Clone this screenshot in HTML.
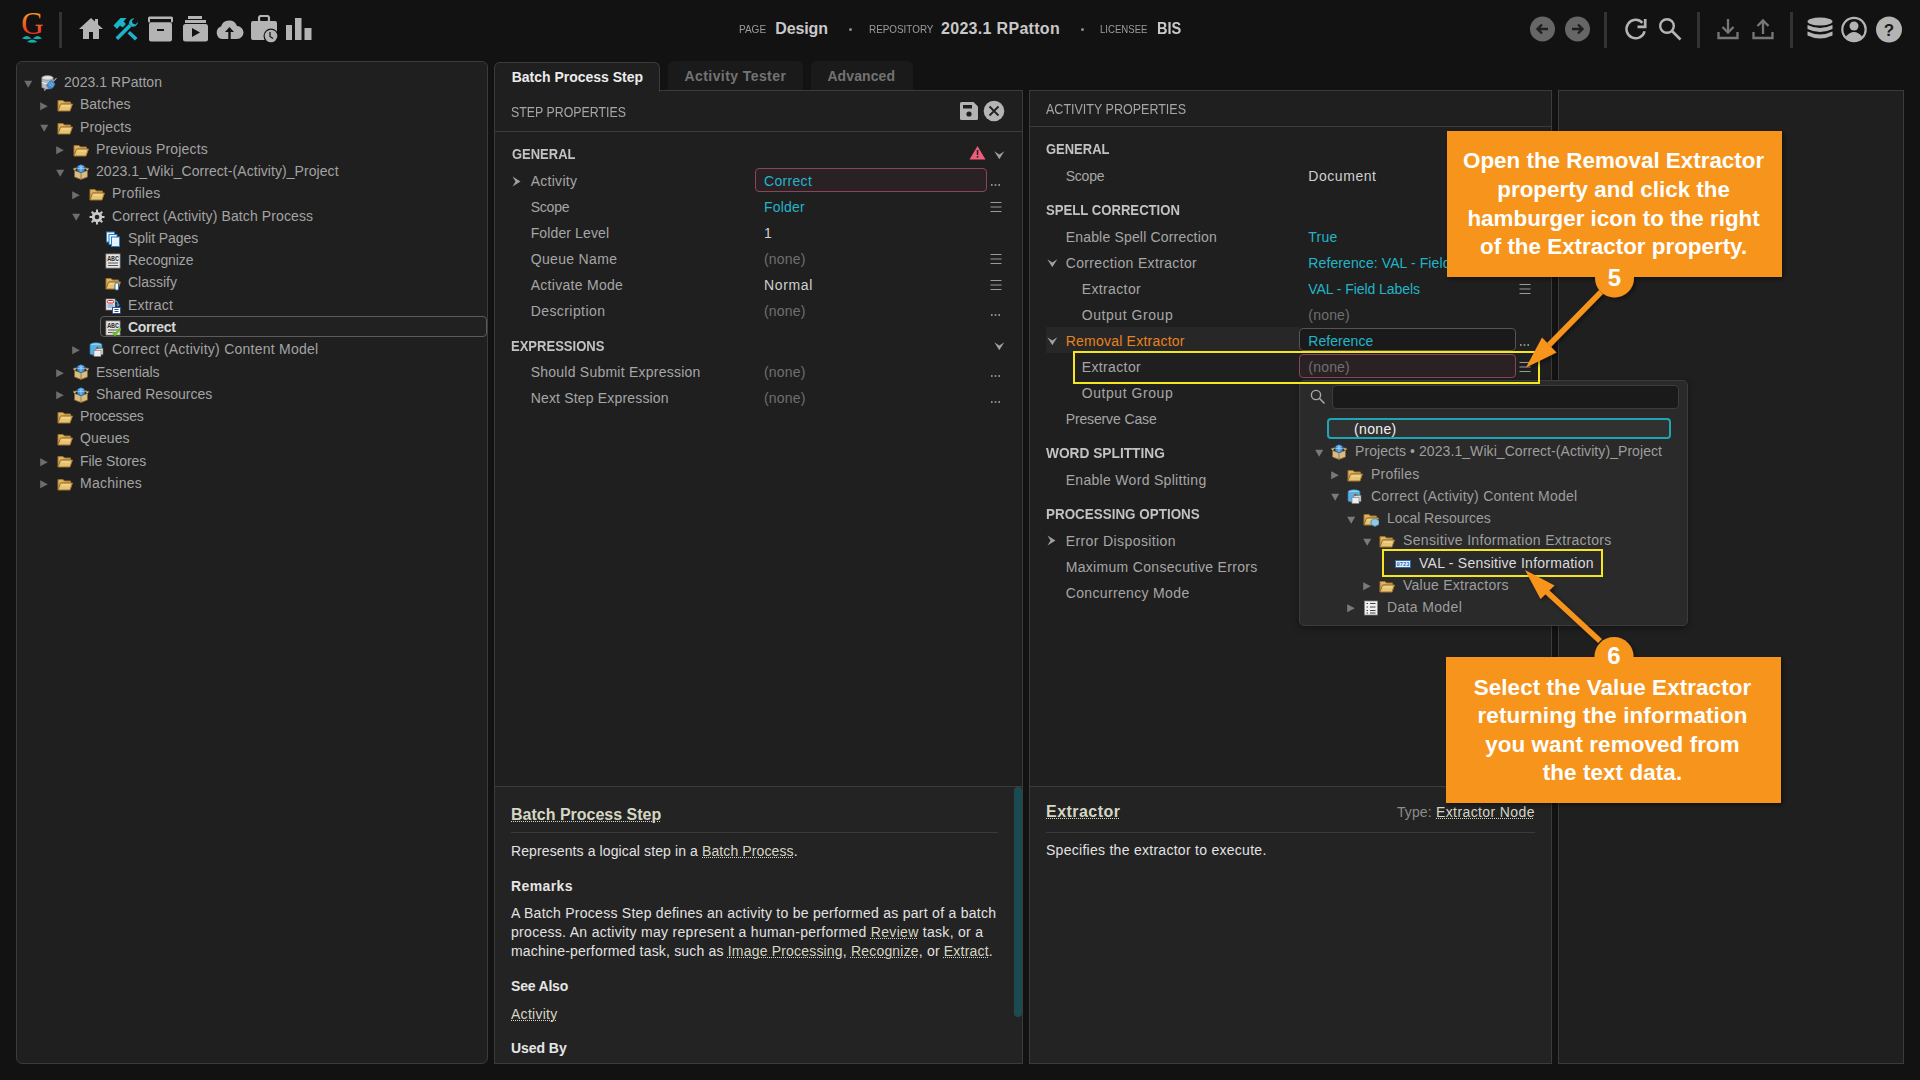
<!DOCTYPE html>
<html><head><meta charset="utf-8"><style>
html,body{margin:0;padding:0;width:1920px;height:1080px;overflow:hidden;background:#121212;}
body{position:relative;font-family:"Liberation Sans",sans-serif;}
.t{position:absolute;white-space:nowrap;}
.r{position:absolute;}
</style></head><body>
<div class="r" style="left:16px;top:61px;width:472px;height:1003px;background:#1f1f1f;border:1px solid #3b3b3b;border-radius:6px;box-sizing:border-box;"></div><div class="r" style="left:494px;top:90px;width:529px;height:974px;background:#1f1f1f;border:1px solid #3b3b3b;box-sizing:border-box;"></div><div class="r" style="left:495px;top:786px;width:527px;height:277px;background:#232323;border-top:1px solid #3b3b3b;box-sizing:border-box;"></div><div class="r" style="left:495px;top:131px;width:527px;height:1px;background:#3b3b3b;"></div><div class="r" style="left:494px;top:62px;width:166px;height:30px;background:#1f1f1f;border:1px solid #3b3b3b;border-bottom:none;border-radius:6px 6px 0 0;box-sizing:border-box;"></div><div class="r" style="left:668px;top:61px;width:135px;height:29px;background:#1a1a1a;border-radius:6px 6px 0 0;"></div><div class="r" style="left:811px;top:61px;width:102px;height:29px;background:#1a1a1a;border-radius:6px 6px 0 0;"></div><div class="r" style="left:1029px;top:90px;width:523px;height:974px;background:#1f1f1f;border:1px solid #3b3b3b;box-sizing:border-box;"></div><div class="r" style="left:1030px;top:126px;width:521px;height:1px;background:#3b3b3b;"></div><div class="r" style="left:1030px;top:786px;width:521px;height:277px;background:#232323;border-top:1px solid #3b3b3b;box-sizing:border-box;"></div><div class="r" style="left:1558px;top:90px;width:346px;height:974px;background:#1f1f1f;border:1px solid #3b3b3b;box-sizing:border-box;"></div><div class="r" style="left:1014px;top:787px;width:8px;height:230px;background:#1b4a50;border-radius:4px;"></div><svg class="r" style="left:16px;top:8px;" width="34" height="40" viewBox="0 0 34 40">
<defs><linearGradient id="gg" x1="0" y1="0" x2="0" y2="1"><stop offset="0.15" stop-color="#f5a020"/><stop offset="0.85" stop-color="#f02a20"/></linearGradient></defs>
<text x="16.5" y="26" font-family="Liberation Serif" font-size="31" fill="url(#gg)" text-anchor="middle">G</text>
<path d="M6 30.5 Q10.5 25.5 15.5 30.5 Q10.5 32 6 30.5Z M17 30.5 Q21.5 25.5 26 30.5 Q21.5 32 17 30.5Z M11 34 Q16 29 21.5 34 Q16 35.5 11 34Z" fill="#12b0a8"/>
</svg><div class="r" style="left:59px;top:12px;width:3px;height:36px;background:#333;"></div><svg class="r" style="left:78px;top:17px;" width="26" height="23" viewBox="0 0 26 23"><path d="M13 1 L25 12 L21 12 L21 22 L15 22 L15 15 L11 15 L11 22 L5 22 L5 12 L1 12 Z" fill="#b4b4b4"/><rect x="17" y="2" width="3" height="6" fill="#b4b4b4"/></svg><svg class="r" style="left:112px;top:16px;" width="27" height="26" viewBox="0 0 27 26"><g fill="#1bb5c9"><path d="M3.5 21.5 L17 8 L19.6 10.6 L6.1 24.1 Z"/><path d="M17 8 A5.2 5.2 0 0 1 22.5 2.2 L19.8 5 L20.8 7.6 L23.4 8.6 L26 5.9 A5.2 5.2 0 0 1 19.6 10.6 Z"/><path d="M1.5 9.5 L8.5 2 L14.5 2 L11.5 5.5 L14 8 L10.5 11.5 L8 9.5 L5 13 Z"/><path d="M15.5 17.5 L18 15 L25.5 22 L23 24.5 Z"/></g></svg><svg class="r" style="left:147px;top:16px;" width="27" height="26" viewBox="0 0 27 26"><rect x="1" y="0.5" width="25" height="6" rx="1.5" fill="#b4b4b4"/><rect x="3" y="3" width="21" height="3" fill="#121212"/><rect x="2" y="6.5" width="23" height="19" rx="2" fill="#b4b4b4"/><rect x="10" y="13" width="7" height="2" fill="#121212"/></svg><svg class="r" style="left:182px;top:16px;" width="27" height="26" viewBox="0 0 27 26"><rect x="6" y="0" width="14" height="3" fill="#b4b4b4"/><rect x="3" y="4" width="21" height="3" fill="#b4b4b4"/><rect x="1" y="8" width="25" height="17.5" rx="2.5" fill="#b4b4b4"/><path d="M10 12 L18 16.5 L10 21 Z" fill="#121212"/></svg><svg class="r" style="left:215px;top:18px;" width="29" height="22" viewBox="0 0 29 22"><path d="M7 21 A6.5 6.5 0 0 1 6 8.5 A8.5 8.5 0 0 1 22 8 A6.5 6.5 0 0 1 22 21 Z" fill="#b4b4b4"/><path d="M14.5 9 L10 14 L13.3 14 L13.3 21 L15.7 21 L15.7 14 L19 14 Z" fill="#121212"/></svg><svg class="r" style="left:250px;top:15px;" width="30" height="29" viewBox="0 0 30 29"><rect x="9" y="1" width="10" height="6" rx="2" fill="none" stroke="#b4b4b4" stroke-width="2.2"/><rect x="1" y="6" width="26" height="19" rx="2" fill="#b4b4b4"/><circle cx="21" cy="21" r="7.5" fill="#121212"/><circle cx="21" cy="21" r="6.3" fill="#b4b4b4"/><path d="M20 17 L20 21.5 L23 23.5" stroke="#121212" stroke-width="1.2" fill="none"/></svg><svg class="r" style="left:285px;top:17px;" width="28" height="24" viewBox="0 0 28 24"><rect x="1" y="8" width="6" height="15" fill="#b4b4b4"/><rect x="10" y="1" width="6.5" height="22" fill="#b4b4b4"/><rect x="19.5" y="11" width="7" height="12" fill="#b4b4b4"/></svg><div class="t" style="left:739.30px;top:24.41px;font-size:10.5px;line-height:10.5px;font-weight:400;color:#9b9b9b;transform:scaleX(0.9542);transform-origin:0 0;">PAGE</div><div class="t" style="left:775.30px;top:20.86px;font-size:16px;line-height:16px;font-weight:700;color:#c9c9c9;letter-spacing:-0.12px;">Design</div><div class="r" style="left:849px;top:28px;width:3px;height:3px;background:#8a8a8a;border-radius:50%;"></div><div class="t" style="left:868.50px;top:24.41px;font-size:10.5px;line-height:10.5px;font-weight:400;color:#9b9b9b;transform:scaleX(0.9416);transform-origin:0 0;">REPOSITORY</div><div class="t" style="left:941.00px;top:20.86px;font-size:16px;line-height:16px;font-weight:700;color:#c9c9c9;letter-spacing:0.308px;">2023.1 RPatton</div><div class="r" style="left:1081px;top:28px;width:3px;height:3px;background:#8a8a8a;border-radius:50%;"></div><div class="t" style="left:1100.30px;top:24.41px;font-size:10.5px;line-height:10.5px;font-weight:400;color:#9b9b9b;transform:scaleX(0.9133);transform-origin:0 0;">LICENSEE</div><div class="t" style="left:1157.00px;top:20.43px;font-size:16.5px;line-height:16.5px;font-weight:700;color:#c9c9c9;transform:scaleX(0.8836);transform-origin:0 0;">BIS</div><svg class="r" style="left:1529px;top:16px;" width="27" height="26" viewBox="0 0 27 26"><circle cx="13.5" cy="13" r="12.5" fill="#666"/><path d="M19 13 H9 M13 8.5 L8.5 13 L13 17.5" stroke="#1e1e1e" stroke-width="2.4" fill="none"/></svg><svg class="r" style="left:1564px;top:16px;" width="27" height="26" viewBox="0 0 27 26"><circle cx="13.5" cy="13" r="12.5" fill="#666"/><path d="M8 13 H18 M14 8.5 L18.5 13 L14 17.5" stroke="#1e1e1e" stroke-width="2.4" fill="none"/></svg><div class="r" style="left:1604px;top:12px;width:3px;height:36px;background:#333;"></div><svg class="r" style="left:1624px;top:17px;" width="24" height="24" viewBox="0 0 24 24"><path d="M18.4 5.8 A9.2 9.2 0 1 0 20.6 14.2" stroke="#b4b4b4" stroke-width="2.5" fill="none"/><path d="M13.5 9.8 H21.2 V2" stroke="#b4b4b4" stroke-width="2.7" fill="none"/></svg><svg class="r" style="left:1658px;top:17px;" width="25" height="24" viewBox="0 0 25 24"><circle cx="9" cy="9" r="6.8" stroke="#b4b4b4" stroke-width="2.4" fill="none"/><path d="M14 14 L22.5 22.5" stroke="#b4b4b4" stroke-width="2.6"/></svg><div class="r" style="left:1697px;top:12px;width:3px;height:36px;background:#333;"></div><svg class="r" style="left:1717px;top:17px;" width="23" height="24" viewBox="0 0 23 24"><path d="M11 2 V15 M5.5 10 L11 15.5 L16.5 10" stroke="#777" stroke-width="2.3" fill="none"/><path d="M1.5 15 V21 H20.5 V15" stroke="#777" stroke-width="2.3" fill="none"/></svg><svg class="r" style="left:1752px;top:17px;" width="23" height="24" viewBox="0 0 23 24"><path d="M11 17 V3.5 M5.5 9 L11 3.5 L16.5 9" stroke="#777" stroke-width="2.3" fill="none"/><path d="M1.5 15 V21 H20.5 V15" stroke="#777" stroke-width="2.3" fill="none"/></svg><div class="r" style="left:1790px;top:12px;width:3px;height:36px;background:#333;"></div><svg class="r" style="left:1806px;top:17px;" width="28" height="24" viewBox="0 0 28 24"><ellipse cx="14" cy="4.5" rx="12.5" ry="4" fill="#b4b4b4"/><path d="M1.5 8 Q14 14 26.5 8 V12 Q14 18 1.5 12Z" fill="#b4b4b4"/><path d="M1.5 14.5 Q14 20.5 26.5 14.5 V18.5 Q14 24.5 1.5 18.5Z" fill="#b4b4b4"/></svg><svg class="r" style="left:1840px;top:16px;" width="28" height="27" viewBox="0 0 28 27"><circle cx="14" cy="13.5" r="11.7" stroke="#b4b4b4" stroke-width="2.2" fill="none"/><circle cx="14" cy="10" r="4.5" fill="#b4b4b4"/><path d="M5.5 21 Q14 11 22.5 21 Q14 28 5.5 21Z" fill="#b4b4b4"/></svg><svg class="r" style="left:1875px;top:16px;" width="28" height="27" viewBox="0 0 28 27"><circle cx="14" cy="13.5" r="13" fill="#b4b4b4"/><text x="14" y="19.5" font-family="Liberation Sans" font-weight="700" font-size="17" fill="#1a1a1a" text-anchor="middle">?</text></svg><svg class="r" style="left:24px;top:79.5px;" width="9" height="8" viewBox="0 0 9 8"><path d="M0.2 0.8 H8.2 L4.2 7.8 Z" fill="#6e6e6e"/></svg><svg class="r" style="left:41px;top:75px;" width="16" height="16" viewBox="0 0 16 16"><path d="M0.8 2.8 V12.5 Q6.5 15.6 12.2 12.5 V2.8" fill="#b8bcc0" stroke="#7a7e82" stroke-width=".6"/><ellipse cx="6.5" cy="2.8" rx="5.7" ry="2.3" fill="#dfe2e5" stroke="#7a7e82" stroke-width=".6"/><path d="M0.8 7.6 Q6.5 10.6 12.2 7.6" stroke="#eef0f2" stroke-width="1" fill="none"/><path d="M3.2 15.5 L15.5 3.2" stroke="#b0b0b0" stroke-width="1.1"/><rect x="6.8" y="6" width="6" height="7.5" rx="1.6" transform="rotate(45 9.8 9.75)" fill="#3f8fd2" stroke="#2a64a0" stroke-width=".6"/><path d="M8 8.5 L11.5 12 M9.5 7 L13 10.5" stroke="#bfe0ff" stroke-width=".6"/></svg><div class="t" style="left:64.00px;top:75.15px;font-size:14px;line-height:14px;font-weight:400;color:#a3a3a3;letter-spacing:0.054px;">2023.1 RPatton</div><svg class="r" style="left:40px;top:101.56px;" width="9" height="9" viewBox="0 0 9 9"><path d="M0.2 0.2 L7.8 4.2 L0.2 8.2 Z" fill="#6e6e6e"/></svg><svg class="r" style="left:57px;top:97px;" width="16" height="16" viewBox="0 0 16 16"><path d="M1 3.5 H6 L7.5 5 H13.5 V7 H4 L1 13.5 Z" fill="#dcb462" stroke="#a0722c" stroke-width="1"/><path d="M3.5 7 H15.5 L13 14 H1 Z" fill="#e6c474" stroke="#a0722c" stroke-width="1"/><path d="M4.5 9 H13" stroke="#f6e2a8" stroke-width="0.8"/></svg><div class="t" style="left:80.00px;top:97.41px;font-size:14px;line-height:14px;font-weight:400;color:#a3a3a3;letter-spacing:-0.033px;">Batches</div><svg class="r" style="left:40px;top:124.02000000000001px;" width="9" height="8" viewBox="0 0 9 8"><path d="M0.2 0.8 H8.2 L4.2 7.8 Z" fill="#6e6e6e"/></svg><svg class="r" style="left:57px;top:120px;" width="16" height="16" viewBox="0 0 16 16"><path d="M1 3.5 H6 L7.5 5 H13.5 V7 H4 L1 13.5 Z" fill="#dcb462" stroke="#a0722c" stroke-width="1"/><path d="M3.5 7 H15.5 L13 14 H1 Z" fill="#e6c474" stroke="#a0722c" stroke-width="1"/><path d="M4.5 9 H13" stroke="#f6e2a8" stroke-width="0.8"/></svg><div class="t" style="left:80.00px;top:119.67px;font-size:14px;line-height:14px;font-weight:400;color:#a3a3a3;letter-spacing:0.1px;">Projects</div><svg class="r" style="left:56px;top:146.08px;" width="9" height="9" viewBox="0 0 9 9"><path d="M0.2 0.2 L7.8 4.2 L0.2 8.2 Z" fill="#6e6e6e"/></svg><svg class="r" style="left:73px;top:142px;" width="16" height="16" viewBox="0 0 16 16"><path d="M1 3.5 H6 L7.5 5 H13.5 V7 H4 L1 13.5 Z" fill="#dcb462" stroke="#a0722c" stroke-width="1"/><path d="M3.5 7 H15.5 L13 14 H1 Z" fill="#e6c474" stroke="#a0722c" stroke-width="1"/><path d="M4.5 9 H13" stroke="#f6e2a8" stroke-width="0.8"/></svg><div class="t" style="left:96.00px;top:141.93px;font-size:14px;line-height:14px;font-weight:400;color:#a3a3a3;letter-spacing:0.175px;">Previous Projects</div><svg class="r" style="left:56px;top:168.54000000000002px;" width="9" height="8" viewBox="0 0 9 8"><path d="M0.2 0.8 H8.2 L4.2 7.8 Z" fill="#6e6e6e"/></svg><svg class="r" style="left:73px;top:164px;" width="16" height="16" viewBox="0 0 16 16"><path d="M1.5 6.5 L8 8.5 L14.5 6.5 V13 L8 15.5 L1.5 13 Z" fill="#d9bb84" stroke="#85622c" stroke-width=".8"/><path d="M8 8.5 V15.5" stroke="#85622c" stroke-width=".7"/><path d="M1.5 6.5 L0 4.5 L5 3.5 M14.5 6.5 L16 4.5 L11 3.5" fill="#e8cc98" stroke="#85622c" stroke-width=".7"/><circle cx="8" cy="4.6" r="3.9" fill="#3d94dc" stroke="#1f5e9c" stroke-width=".6"/><path d="M4.5 4.6 H11.5 M8 1 V8 M5.5 2.5 Q8 4 10.5 2.5" stroke="#cfe8ff" stroke-width=".6" fill="none"/></svg><div class="t" style="left:96.00px;top:164.19px;font-size:14px;line-height:14px;font-weight:400;color:#a3a3a3;letter-spacing:0.057px;">2023.1_Wiki_Correct-(Activity)_Project</div><svg class="r" style="left:72px;top:190.60000000000002px;" width="9" height="9" viewBox="0 0 9 9"><path d="M0.2 0.2 L7.8 4.2 L0.2 8.2 Z" fill="#6e6e6e"/></svg><svg class="r" style="left:89px;top:186px;" width="16" height="16" viewBox="0 0 16 16"><path d="M1 3.5 H6 L7.5 5 H13.5 V7 H4 L1 13.5 Z" fill="#dcb462" stroke="#a0722c" stroke-width="1"/><path d="M3.5 7 H15.5 L13 14 H1 Z" fill="#e6c474" stroke="#a0722c" stroke-width="1"/><path d="M4.5 9 H13" stroke="#f6e2a8" stroke-width="0.8"/></svg><div class="t" style="left:112.00px;top:186.45px;font-size:14px;line-height:14px;font-weight:400;color:#a3a3a3;letter-spacing:0.214px;">Profiles</div><svg class="r" style="left:72px;top:213.06px;" width="9" height="8" viewBox="0 0 9 8"><path d="M0.2 0.8 H8.2 L4.2 7.8 Z" fill="#6e6e6e"/></svg><svg class="r" style="left:89px;top:209px;" width="16" height="16" viewBox="0 0 16 16"><g fill="#c8c8c8"><circle cx="8" cy="8" r="5.2"/><rect x="7" y="0.5" width="2" height="15"/><rect x="0.5" y="7" width="15" height="2"/><rect x="7" y="0.5" width="2" height="15" transform="rotate(45 8 8)"/><rect x="7" y="0.5" width="2" height="15" transform="rotate(-45 8 8)"/></g><circle cx="8" cy="8" r="2.3" fill="#1f1f1f"/></svg><div class="t" style="left:112.00px;top:208.71px;font-size:14px;line-height:14px;font-weight:400;color:#a3a3a3;letter-spacing:0.11px;">Correct (Activity) Batch Process</div><svg class="r" style="left:105px;top:231px;" width="16" height="16" viewBox="0 0 16 16"><rect x="1.5" y="1" width="8" height="10" fill="#e8f2fa" stroke="#2f7fc0" stroke-width="1"/><rect x="4" y="3.5" width="8" height="10" fill="#e8f2fa" stroke="#2f7fc0" stroke-width="1"/><rect x="6.5" y="6" width="8" height="9.5" fill="#e8f2fa" stroke="#2f7fc0" stroke-width="1"/></svg><div class="t" style="left:128.00px;top:230.97px;font-size:14px;line-height:14px;font-weight:400;color:#a3a3a3;letter-spacing:-0.05px;">Split Pages</div><svg class="r" style="left:105px;top:253px;" width="16" height="16" viewBox="0 0 16 16"><rect x="1" y="1" width="14" height="14" fill="#e6e6e6" stroke="#9a9a9a" stroke-width=".8"/><text x="8" y="7.6" font-family="Liberation Mono" font-weight="700" font-size="6.5" fill="#333" text-anchor="middle">ABC</text><path d="M3 10 H13 M3 12.5 H13" stroke="#555" stroke-width="1"/></svg><div class="t" style="left:128.00px;top:253.23px;font-size:14px;line-height:14px;font-weight:400;color:#a3a3a3;letter-spacing:-0.075px;">Recognize</div><svg class="r" style="left:105px;top:275px;" width="16" height="16" viewBox="0 0 16 16"><path d="M1 3.5 H6 L7.5 5 H13.5 V7 H4 L1 13.5 Z" fill="#dcb462" stroke="#a0722c" stroke-width="1"/><path d="M3.5 7 H15.5 L13 14 H1 Z" fill="#e6c474" stroke="#a0722c" stroke-width="1"/><path d="M4.5 9 H13" stroke="#f6e2a8" stroke-width="0.8"/><rect x="10" y="8" width="3.5" height="7" rx="1" fill="#fff" stroke="#2a6aa8" stroke-width="1"/></svg><div class="t" style="left:128.00px;top:275.49px;font-size:14px;line-height:14px;font-weight:400;color:#a3a3a3;letter-spacing:0.0px;">Classify</div><svg class="r" style="left:105px;top:298px;" width="16" height="16" viewBox="0 0 16 16"><rect x="1" y="1" width="9" height="11" fill="#e8e8e8" stroke="#999" stroke-width=".6"/><rect x="2.5" y="2.5" width="6" height="2.5" rx="1" fill="#fff" stroke="#d02020" stroke-width="1"/><path d="M2.5 7 H8.5 M2.5 9 H8.5" stroke="#4a88c8" stroke-width=".9"/><path d="M10 3 Q13 3 13 7" stroke="#3a90d8" stroke-width="1.5" fill="none"/><path d="M11 6.5 L13 9 L15 6.5Z" fill="#3a90d8"/><rect x="7.5" y="9.5" width="8" height="6" fill="#fff" stroke="#3050a0" stroke-width="1"/><path d="M9.5 11.5 H13.5 M9.5 13.5 H13.5" stroke="#333" stroke-width=".9"/></svg><div class="t" style="left:128.00px;top:297.75px;font-size:14px;line-height:14px;font-weight:400;color:#a3a3a3;letter-spacing:0.2px;">Extract</div><div class="r" style="left:100px;top:316px;width:387px;height:21px;border:1px solid #5c5c5c;border-radius:4px;box-sizing:border-box;background:#212121;"></div><svg class="r" style="left:105px;top:320px;" width="16" height="16" viewBox="0 0 16 16"><rect x="1" y="1" width="14" height="14" fill="#e6e6e6" stroke="#9a9a9a" stroke-width=".8"/><text x="8" y="7.6" font-family="Liberation Mono" font-weight="700" font-size="6.5" fill="#333" text-anchor="middle">ABC</text><path d="M3 10 H13 M3 12.5 H13" stroke="#555" stroke-width="1"/><path d="M7.5 12 L10 14.5 L15.5 8.5" stroke="#6cc02a" stroke-width="2.4" fill="none"/></svg><div class="t" style="left:128.00px;top:320.01px;font-size:14px;line-height:14px;font-weight:700;color:#d6d6d6;letter-spacing:-0.333px;">Correct</div><svg class="r" style="left:72px;top:346.42px;" width="9" height="9" viewBox="0 0 9 9"><path d="M0.2 0.2 L7.8 4.2 L0.2 8.2 Z" fill="#6e6e6e"/></svg><svg class="r" style="left:89px;top:342px;" width="16" height="16" viewBox="0 0 16 16"><ellipse cx="7" cy="3" rx="6" ry="2.3" fill="#8ed0f0" stroke="#2a7ab8" stroke-width=".7"/><path d="M1 3 V12 Q7 15 13 12 V3" fill="#5ab0e0" stroke="#2a7ab8" stroke-width=".7"/><rect x="7" y="6.5" width="7" height="6" fill="#ddd" stroke="#777" stroke-width=".6"/><rect x="5" y="8.5" width="7" height="6" fill="#eee" stroke="#777" stroke-width=".6"/><path d="M7.5 6.5 L9 5" stroke="#d02020" stroke-width="1.2"/><path d="M9 6.5 L11 5" stroke="#40a040" stroke-width="1.2"/></svg><div class="t" style="left:112.00px;top:342.27px;font-size:14px;line-height:14px;font-weight:400;color:#a3a3a3;letter-spacing:0.252px;">Correct (Activity) Content Model</div><svg class="r" style="left:56px;top:368.68px;" width="9" height="9" viewBox="0 0 9 9"><path d="M0.2 0.2 L7.8 4.2 L0.2 8.2 Z" fill="#6e6e6e"/></svg><svg class="r" style="left:73px;top:364px;" width="16" height="16" viewBox="0 0 16 16"><path d="M1.5 6.5 L8 8.5 L14.5 6.5 V13 L8 15.5 L1.5 13 Z" fill="#d9bb84" stroke="#85622c" stroke-width=".8"/><path d="M8 8.5 V15.5" stroke="#85622c" stroke-width=".7"/><path d="M1.5 6.5 L0 4.5 L5 3.5 M14.5 6.5 L16 4.5 L11 3.5" fill="#e8cc98" stroke="#85622c" stroke-width=".7"/><circle cx="8" cy="4.6" r="3.9" fill="#3d94dc" stroke="#1f5e9c" stroke-width=".6"/><path d="M4.5 4.6 H11.5 M8 1 V8 M5.5 2.5 Q8 4 10.5 2.5" stroke="#cfe8ff" stroke-width=".6" fill="none"/></svg><div class="t" style="left:96.00px;top:364.53px;font-size:14px;line-height:14px;font-weight:400;color:#a3a3a3;letter-spacing:-0.022px;">Essentials</div><svg class="r" style="left:56px;top:390.94000000000005px;" width="9" height="9" viewBox="0 0 9 9"><path d="M0.2 0.2 L7.8 4.2 L0.2 8.2 Z" fill="#6e6e6e"/></svg><svg class="r" style="left:73px;top:387px;" width="16" height="16" viewBox="0 0 16 16"><path d="M1.5 6.5 L8 8.5 L14.5 6.5 V13 L8 15.5 L1.5 13 Z" fill="#d9bb84" stroke="#85622c" stroke-width=".8"/><path d="M8 8.5 V15.5" stroke="#85622c" stroke-width=".7"/><path d="M1.5 6.5 L0 4.5 L5 3.5 M14.5 6.5 L16 4.5 L11 3.5" fill="#e8cc98" stroke="#85622c" stroke-width=".7"/><circle cx="8" cy="4.6" r="3.9" fill="#3d94dc" stroke="#1f5e9c" stroke-width=".6"/><path d="M4.5 4.6 H11.5 M8 1 V8 M5.5 2.5 Q8 4 10.5 2.5" stroke="#cfe8ff" stroke-width=".6" fill="none"/></svg><div class="t" style="left:96.00px;top:386.79px;font-size:14px;line-height:14px;font-weight:400;color:#a3a3a3;letter-spacing:0.027px;">Shared Resources</div><svg class="r" style="left:57px;top:409px;" width="16" height="16" viewBox="0 0 16 16"><path d="M1 3.5 H6 L7.5 5 H13.5 V7 H4 L1 13.5 Z" fill="#dcb462" stroke="#a0722c" stroke-width="1"/><path d="M3.5 7 H15.5 L13 14 H1 Z" fill="#e6c474" stroke="#a0722c" stroke-width="1"/><path d="M4.5 9 H13" stroke="#f6e2a8" stroke-width="0.8"/></svg><div class="t" style="left:80.00px;top:409.05px;font-size:14px;line-height:14px;font-weight:400;color:#a3a3a3;letter-spacing:-0.2px;">Processes</div><svg class="r" style="left:57px;top:431px;" width="16" height="16" viewBox="0 0 16 16"><path d="M1 3.5 H6 L7.5 5 H13.5 V7 H4 L1 13.5 Z" fill="#dcb462" stroke="#a0722c" stroke-width="1"/><path d="M3.5 7 H15.5 L13 14 H1 Z" fill="#e6c474" stroke="#a0722c" stroke-width="1"/><path d="M4.5 9 H13" stroke="#f6e2a8" stroke-width="0.8"/></svg><div class="t" style="left:80.00px;top:431.31px;font-size:14px;line-height:14px;font-weight:400;color:#a3a3a3;letter-spacing:0.1px;">Queues</div><svg class="r" style="left:40px;top:457.72px;" width="9" height="9" viewBox="0 0 9 9"><path d="M0.2 0.2 L7.8 4.2 L0.2 8.2 Z" fill="#6e6e6e"/></svg><svg class="r" style="left:57px;top:453px;" width="16" height="16" viewBox="0 0 16 16"><path d="M1 3.5 H6 L7.5 5 H13.5 V7 H4 L1 13.5 Z" fill="#dcb462" stroke="#a0722c" stroke-width="1"/><path d="M3.5 7 H15.5 L13 14 H1 Z" fill="#e6c474" stroke="#a0722c" stroke-width="1"/><path d="M4.5 9 H13" stroke="#f6e2a8" stroke-width="0.8"/></svg><div class="t" style="left:80.00px;top:453.57px;font-size:14px;line-height:14px;font-weight:400;color:#a3a3a3;letter-spacing:-0.07px;">File Stores</div><svg class="r" style="left:40px;top:479.98px;" width="9" height="9" viewBox="0 0 9 9"><path d="M0.2 0.2 L7.8 4.2 L0.2 8.2 Z" fill="#6e6e6e"/></svg><svg class="r" style="left:57px;top:476px;" width="16" height="16" viewBox="0 0 16 16"><path d="M1 3.5 H6 L7.5 5 H13.5 V7 H4 L1 13.5 Z" fill="#dcb462" stroke="#a0722c" stroke-width="1"/><path d="M3.5 7 H15.5 L13 14 H1 Z" fill="#e6c474" stroke="#a0722c" stroke-width="1"/><path d="M4.5 9 H13" stroke="#f6e2a8" stroke-width="0.8"/></svg><div class="t" style="left:80.00px;top:475.83px;font-size:14px;line-height:14px;font-weight:400;color:#a3a3a3;letter-spacing:0.257px;">Machines</div><div class="t" style="left:511.70px;top:70.15px;font-size:14px;line-height:14px;font-weight:700;color:#ececec;letter-spacing:-0.012px;">Batch Process Step</div><div class="t" style="left:684.50px;top:69.35px;font-size:14px;line-height:14px;font-weight:700;color:#737373;letter-spacing:0.421px;">Activity Tester</div><div class="t" style="left:827.40px;top:69.35px;font-size:14px;line-height:14px;font-weight:700;color:#737373;letter-spacing:0.1px;">Advanced</div><div class="t" style="left:511.00px;top:105.15px;font-size:14px;line-height:14px;font-weight:400;color:#a6a6a6;transform:scaleX(0.8833);transform-origin:0 0;">STEP PROPERTIES</div><svg class="r" style="left:959px;top:101px;" width="20" height="20" viewBox="0 0 20 20"><path d="M1 2.5 Q1 1 2.5 1 H14.5 L19 5.5 V17.5 Q19 19 17.5 19 H2.5 Q1 19 1 17.5 Z" fill="#b4b4b4"/><rect x="4" y="4" width="9" height="3.5" fill="#1f1f1f"/><circle cx="10" cy="13" r="2.6" fill="#1f1f1f"/></svg><svg class="r" style="left:983px;top:100px;" width="22" height="22" viewBox="0 0 22 22"><circle cx="11" cy="11" r="10.3" fill="#b4b4b4"/><path d="M6.5 6.5 L15.5 15.5 M15.5 6.5 L6.5 15.5" stroke="#1f1f1f" stroke-width="1.8"/></svg><div class="t" style="left:511.60px;top:146.90px;font-size:14px;line-height:14px;font-weight:700;color:#c2c2c2;transform:scaleX(0.9269);transform-origin:0 0;">GENERAL</div><svg class="r" style="left:969px;top:145px;" width="17" height="15" viewBox="0 0 17 15"><path d="M8.5 1 L16.5 14.5 H0.5 Z" fill="#ee5d7a"/><rect x="7.8" y="5" width="1.5" height="5" fill="#1f1f1f"/><rect x="7.8" y="11" width="1.5" height="1.6" fill="#1f1f1f"/></svg><svg class="r" style="left:994px;top:150.5px;" width="11" height="8" viewBox="0 0 11 8"><path d="M0.3 0.2 L5.3 3.6 L10.3 0.2 L5.3 8.2 Z" fill="#a0a0a0"/></svg><svg class="r" style="left:512px;top:176px;" width="9" height="11" viewBox="0 0 9 11"><path d="M0.5 0.5 L8.5 5.5 L0.5 10.5 L3.5 5.5 Z" fill="#a0a0a0"/></svg><div class="r" style="left:755px;top:168px;width:232px;height:24px;border:1px solid #8a4558;background:#2a2125;border-radius:4px;box-sizing:border-box;"></div><div class="t" style="left:530.70px;top:174.35px;font-size:14px;line-height:14px;font-weight:400;color:#a6a6a6;letter-spacing:0.271px;">Activity</div><div class="t" style="left:764.00px;top:174.35px;font-size:14px;line-height:14px;font-weight:400;color:#22b5c9;letter-spacing:0.317px;">Correct</div><svg class="r" style="left:990px;top:183.2px;" width="12" height="4" viewBox="0 0 12 4"><rect x="1" y="1.2" width="1.6" height="1.6" fill="#a8a8a8"/><rect x="4.7" y="1.2" width="1.6" height="1.6" fill="#a8a8a8"/><rect x="8.4" y="1.2" width="1.6" height="1.6" fill="#a8a8a8"/></svg><div class="t" style="left:530.70px;top:200.35px;font-size:14px;line-height:14px;font-weight:400;color:#a6a6a6;letter-spacing:-0.225px;">Scope</div><div class="t" style="left:764.00px;top:200.35px;font-size:14px;line-height:14px;font-weight:400;color:#22b5c9;letter-spacing:0.22px;">Folder</div><svg class="r" style="left:990px;top:201.2px;" width="12" height="12" viewBox="0 0 12 12"><path d="M0.5 1.5 H11.5 M0.5 6 H11.5 M0.5 10.5 H11.5" stroke="#9a9a9a" stroke-width="1.15"/></svg><div class="t" style="left:530.70px;top:226.35px;font-size:14px;line-height:14px;font-weight:400;color:#a6a6a6;letter-spacing:0.118px;">Folder Level</div><div class="t" style="left:764.00px;top:226.35px;font-size:14px;line-height:14px;font-weight:400;color:#cfcfcf;letter-spacing:0.1px;">1</div><div class="t" style="left:530.70px;top:252.35px;font-size:14px;line-height:14px;font-weight:400;color:#a6a6a6;letter-spacing:0.333px;">Queue Name</div><div class="t" style="left:764.00px;top:252.35px;font-size:14px;line-height:14px;font-weight:400;color:#6f6f6f;letter-spacing:0.2px;">(none)</div><svg class="r" style="left:990px;top:253.2px;" width="12" height="12" viewBox="0 0 12 12"><path d="M0.5 1.5 H11.5 M0.5 6 H11.5 M0.5 10.5 H11.5" stroke="#9a9a9a" stroke-width="1.15"/></svg><div class="t" style="left:530.70px;top:278.35px;font-size:14px;line-height:14px;font-weight:400;color:#a6a6a6;letter-spacing:0.292px;">Activate Mode</div><div class="t" style="left:764.00px;top:278.35px;font-size:14px;line-height:14px;font-weight:400;color:#cfcfcf;letter-spacing:0.64px;">Normal</div><svg class="r" style="left:990px;top:279.2px;" width="12" height="12" viewBox="0 0 12 12"><path d="M0.5 1.5 H11.5 M0.5 6 H11.5 M0.5 10.5 H11.5" stroke="#9a9a9a" stroke-width="1.15"/></svg><div class="t" style="left:530.70px;top:304.35px;font-size:14px;line-height:14px;font-weight:400;color:#a6a6a6;letter-spacing:0.42px;">Description</div><div class="t" style="left:764.00px;top:304.35px;font-size:14px;line-height:14px;font-weight:400;color:#6f6f6f;letter-spacing:0.2px;">(none)</div><svg class="r" style="left:990px;top:313.2px;" width="12" height="4" viewBox="0 0 12 4"><rect x="1" y="1.2" width="1.6" height="1.6" fill="#a8a8a8"/><rect x="4.7" y="1.2" width="1.6" height="1.6" fill="#a8a8a8"/><rect x="8.4" y="1.2" width="1.6" height="1.6" fill="#a8a8a8"/></svg><div class="t" style="left:511.00px;top:338.85px;font-size:14px;line-height:14px;font-weight:700;color:#c2c2c2;transform:scaleX(0.9303);transform-origin:0 0;">EXPRESSIONS</div><svg class="r" style="left:994px;top:342px;" width="11" height="8" viewBox="0 0 11 8"><path d="M0.3 0.2 L5.3 3.6 L10.3 0.2 L5.3 8.2 Z" fill="#a0a0a0"/></svg><div class="t" style="left:530.70px;top:365.35px;font-size:14px;line-height:14px;font-weight:400;color:#a6a6a6;letter-spacing:0.235px;">Should Submit Expression</div><div class="t" style="left:764.00px;top:365.35px;font-size:14px;line-height:14px;font-weight:400;color:#6f6f6f;letter-spacing:0.2px;">(none)</div><svg class="r" style="left:990px;top:374.2px;" width="12" height="4" viewBox="0 0 12 4"><rect x="1" y="1.2" width="1.6" height="1.6" fill="#a8a8a8"/><rect x="4.7" y="1.2" width="1.6" height="1.6" fill="#a8a8a8"/><rect x="8.4" y="1.2" width="1.6" height="1.6" fill="#a8a8a8"/></svg><div class="t" style="left:530.70px;top:391.45px;font-size:14px;line-height:14px;font-weight:400;color:#a6a6a6;letter-spacing:0.174px;">Next Step Expression</div><div class="t" style="left:764.00px;top:391.45px;font-size:14px;line-height:14px;font-weight:400;color:#6f6f6f;letter-spacing:0.2px;">(none)</div><svg class="r" style="left:990px;top:400.3px;" width="12" height="4" viewBox="0 0 12 4"><rect x="1" y="1.2" width="1.6" height="1.6" fill="#a8a8a8"/><rect x="4.7" y="1.2" width="1.6" height="1.6" fill="#a8a8a8"/><rect x="8.4" y="1.2" width="1.6" height="1.6" fill="#a8a8a8"/></svg><div class="t" style="left:511.00px;top:807.16px;font-size:16px;line-height:16px;font-weight:700;color:#d6d6c4;letter-spacing:0.0px;"><span style="color:#d6d6c4;text-decoration:underline dotted #d6d6c4;text-decoration-thickness:1px;text-underline-offset:0.5px;">Batch Process Step</span></div><div class="r" style="left:511px;top:832px;width:487px;height:1px;background:#3a3a3a;"></div><div class="t" style="left:511.00px;top:844.45px;font-size:14px;line-height:14px;font-weight:400;color:#e2e2e2;letter-spacing:0.111px;">Represents a logical step in a <span style="color:#d6d6c4;text-decoration:underline dotted #d6d6c4;text-decoration-thickness:1px;text-underline-offset:0.5px;">Batch Process</span>.</div><div class="t" style="left:511.00px;top:879.45px;font-size:14px;line-height:14px;font-weight:700;color:#e6e6e6;letter-spacing:0.4px;">Remarks</div><div class="t" style="left:511.00px;top:906.15px;font-size:14px;line-height:14px;font-weight:400;color:#e2e2e2;letter-spacing:0.265px;">A Batch Process Step defines an activity to be performed as part of a batch</div><div class="t" style="left:511.00px;top:925.25px;font-size:14px;line-height:14px;font-weight:400;color:#e2e2e2;letter-spacing:0.3px;">process. An activity may represent a human-performed <span style="color:#d6d6c4;text-decoration:underline dotted #d6d6c4;text-decoration-thickness:1px;text-underline-offset:0.5px;">Review</span> task, or a</div><div class="t" style="left:511.00px;top:944.35px;font-size:14px;line-height:14px;font-weight:400;color:#e2e2e2;letter-spacing:0.185px;">machine-performed task, such as <span style="color:#d6d6c4;text-decoration:underline dotted #d6d6c4;text-decoration-thickness:1px;text-underline-offset:0.5px;">Image Processing</span>, <span style="color:#d6d6c4;text-decoration:underline dotted #d6d6c4;text-decoration-thickness:1px;text-underline-offset:0.5px;">Recognize</span>, or <span style="color:#d6d6c4;text-decoration:underline dotted #d6d6c4;text-decoration-thickness:1px;text-underline-offset:0.5px;">Extract</span>.</div><div class="t" style="left:511.00px;top:979.15px;font-size:14px;line-height:14px;font-weight:700;color:#e6e6e6;letter-spacing:-0.2px;">See Also</div><div class="t" style="left:511.00px;top:1007.45px;font-size:14px;line-height:14px;font-weight:400;color:#d6d6c4;letter-spacing:0.271px;"><span style="color:#d6d6c4;text-decoration:underline dotted #d6d6c4;text-decoration-thickness:1px;text-underline-offset:0.5px;">Activity</span></div><div class="t" style="left:511.00px;top:1041.15px;font-size:14px;line-height:14px;font-weight:700;color:#e6e6e6;letter-spacing:-0.05px;">Used By</div><div class="t" style="left:1046.00px;top:102.45px;font-size:14px;line-height:14px;font-weight:400;color:#a6a6a6;transform:scaleX(0.8940);transform-origin:0 0;">ACTIVITY PROPERTIES</div><div class="t" style="left:1046.00px;top:142.45px;font-size:14px;line-height:14px;font-weight:700;color:#c2c2c2;transform:scaleX(0.9269);transform-origin:0 0;">GENERAL</div><div class="t" style="left:1065.70px;top:169.15px;font-size:14px;line-height:14px;font-weight:400;color:#a6a6a6;letter-spacing:-0.225px;">Scope</div><div class="t" style="left:1308.30px;top:169.15px;font-size:14px;line-height:14px;font-weight:400;color:#cfcfcf;letter-spacing:0.557px;">Document</div><div class="t" style="left:1046.00px;top:203.15px;font-size:14px;line-height:14px;font-weight:700;color:#c2c2c2;transform:scaleX(0.9377);transform-origin:0 0;">SPELL CORRECTION</div><div class="t" style="left:1065.70px;top:230.45px;font-size:14px;line-height:14px;font-weight:400;color:#a6a6a6;letter-spacing:0.177px;">Enable Spell Correction</div><div class="t" style="left:1308.30px;top:230.45px;font-size:14px;line-height:14px;font-weight:400;color:#22b5c9;letter-spacing:0.233px;">True</div><div class="t" style="left:1065.70px;top:256.45px;font-size:14px;line-height:14px;font-weight:400;color:#a6a6a6;letter-spacing:0.342px;">Correction Extractor</div><svg class="r" style="left:1047px;top:258.8px;" width="11" height="8" viewBox="0 0 11 8"><path d="M0.3 0.2 L5.3 3.6 L10.3 0.2 L5.3 8.2 Z" fill="#a0a0a0"/></svg><div class="t" style="left:1308.30px;top:256.45px;font-size:14px;line-height:14px;font-weight:400;color:#22b5c9;letter-spacing:0.1px;">Reference: VAL - Field Labels</div><div class="t" style="left:1081.70px;top:282.45px;font-size:14px;line-height:14px;font-weight:400;color:#a6a6a6;letter-spacing:0.375px;">Extractor</div><div class="t" style="left:1308.30px;top:282.45px;font-size:14px;line-height:14px;font-weight:400;color:#22b5c9;letter-spacing:-0.065px;">VAL - Field Labels</div><svg class="r" style="left:1519px;top:283.3px;" width="12" height="12" viewBox="0 0 12 12"><path d="M0.5 1.5 H11.5 M0.5 6 H11.5 M0.5 10.5 H11.5" stroke="#9a9a9a" stroke-width="1.15"/></svg><div class="t" style="left:1081.70px;top:308.45px;font-size:14px;line-height:14px;font-weight:400;color:#a6a6a6;letter-spacing:0.564px;">Output Group</div><div class="t" style="left:1308.30px;top:308.45px;font-size:14px;line-height:14px;font-weight:400;color:#6f6f6f;letter-spacing:0.2px;">(none)</div><div class="r" style="left:1046px;top:327px;width:253px;height:26px;background:#272727;"></div><svg class="r" style="left:1047px;top:337px;" width="11" height="8" viewBox="0 0 11 8"><path d="M0.3 0.2 L5.3 3.6 L10.3 0.2 L5.3 8.2 Z" fill="#a0a0a0"/></svg><div class="t" style="left:1065.70px;top:334.45px;font-size:14px;line-height:14px;font-weight:400;color:#e8821e;letter-spacing:0.225px;">Removal Extractor</div><div class="r" style="left:1299px;top:328px;width:217px;height:23px;border:1px solid #555555;background:#1a1a1a;border-radius:4px;box-sizing:border-box;"></div><div class="t" style="left:1308.30px;top:334.45px;font-size:14px;line-height:14px;font-weight:400;color:#22b5c9;letter-spacing:0.05px;">Reference</div><svg class="r" style="left:1519px;top:343px;" width="12" height="4" viewBox="0 0 12 4"><rect x="1" y="1.2" width="1.6" height="1.6" fill="#a8a8a8"/><rect x="4.7" y="1.2" width="1.6" height="1.6" fill="#a8a8a8"/><rect x="8.4" y="1.2" width="1.6" height="1.6" fill="#a8a8a8"/></svg><div class="t" style="left:1081.70px;top:360.45px;font-size:14px;line-height:14px;font-weight:400;color:#a6a6a6;letter-spacing:0.375px;">Extractor</div><div class="r" style="left:1299px;top:354px;width:217px;height:24px;border:1px solid #8a4558;background:#2a2125;border-radius:4px;box-sizing:border-box;"></div><div class="t" style="left:1308.30px;top:360.45px;font-size:14px;line-height:14px;font-weight:400;color:#6f6f6f;letter-spacing:0.2px;">(none)</div><svg class="r" style="left:1519px;top:361px;" width="12" height="12" viewBox="0 0 12 12"><path d="M0.5 1.5 H11.5 M0.5 6 H11.5 M0.5 10.5 H11.5" stroke="#9a9a9a" stroke-width="1.15"/></svg><div class="t" style="left:1081.70px;top:386.45px;font-size:14px;line-height:14px;font-weight:400;color:#a6a6a6;letter-spacing:0.564px;">Output Group</div><div class="t" style="left:1065.70px;top:412.45px;font-size:14px;line-height:14px;font-weight:400;color:#a6a6a6;letter-spacing:-0.133px;">Preserve Case</div><div class="t" style="left:1046.00px;top:445.65px;font-size:14px;line-height:14px;font-weight:700;color:#c2c2c2;transform:scaleX(0.9794);transform-origin:0 0;">WORD SPLITTING</div><div class="t" style="left:1065.70px;top:472.85px;font-size:14px;line-height:14px;font-weight:400;color:#a6a6a6;letter-spacing:0.305px;">Enable Word Splitting</div><div class="t" style="left:1046.00px;top:506.95px;font-size:14px;line-height:14px;font-weight:700;color:#c2c2c2;transform:scaleX(0.9594);transform-origin:0 0;">PROCESSING OPTIONS</div><svg class="r" style="left:1047px;top:535px;" width="9" height="11" viewBox="0 0 9 11"><path d="M0.5 0.5 L8.5 5.5 L0.5 10.5 L3.5 5.5 Z" fill="#a0a0a0"/></svg><div class="t" style="left:1065.70px;top:533.75px;font-size:14px;line-height:14px;font-weight:400;color:#a6a6a6;letter-spacing:0.4px;">Error Disposition</div><div class="t" style="left:1065.70px;top:559.95px;font-size:14px;line-height:14px;font-weight:400;color:#a6a6a6;letter-spacing:0.32px;">Maximum Consecutive Errors</div><div class="t" style="left:1065.70px;top:586.15px;font-size:14px;line-height:14px;font-weight:400;color:#a6a6a6;letter-spacing:0.347px;">Concurrency Mode</div><div class="t" style="left:1046.00px;top:804.26px;font-size:16px;line-height:16px;font-weight:700;color:#d6d6c4;letter-spacing:0.463px;"><span style="color:#d6d6c4;text-decoration:underline dotted #d6d6c4;text-decoration-thickness:1px;text-underline-offset:0.5px;">Extractor</span></div><div class="t" style="left:1397.00px;top:805.15px;font-size:14px;line-height:14px;font-weight:400;color:#8c8c8c;letter-spacing:0.075px;">Type: </div><div class="t" style="left:1436.00px;top:805.15px;font-size:14px;line-height:14px;font-weight:400;color:#d6d6c4;letter-spacing:0.392px;"><span style="color:#d6d6c4;text-decoration:underline dotted #d6d6c4;text-decoration-thickness:1px;text-underline-offset:0.5px;">Extractor Node</span></div><div class="r" style="left:1046px;top:832px;width:489px;height:1px;background:#3a3a3a;"></div><div class="t" style="left:1046.00px;top:842.85px;font-size:14px;line-height:14px;font-weight:400;color:#e2e2e2;letter-spacing:0.276px;">Specifies the extractor to execute.</div><div class="r" style="left:1299px;top:380px;width:389px;height:246px;background:#2a2a2a;border:1px solid #3c3c3c;border-radius:5px;box-sizing:border-box;box-shadow:0 2px 6px rgba(0,0,0,.4);"></div><svg class="r" style="left:1310px;top:389px;" width="16" height="16" viewBox="0 0 16 16"><circle cx="6" cy="6" r="4.6" stroke="#a8a8a8" stroke-width="1.4" fill="none"/><path d="M9.3 9.3 L14.5 14.5" stroke="#a8a8a8" stroke-width="1.6"/></svg><div class="r" style="left:1332px;top:385px;width:347px;height:24px;background:#1a1a1a;border:1px solid #3c3c3c;border-radius:4px;box-sizing:border-box;"></div><div class="r" style="left:1327px;top:418px;width:344px;height:21px;background:#313131;border:2px solid #1ea5b6;border-radius:4px;box-sizing:border-box;"></div><div class="t" style="left:1354.00px;top:422.15px;font-size:14px;line-height:14px;font-weight:400;color:#f2f2f2;letter-spacing:0.35px;">(none)</div><svg class="r" style="left:1315px;top:448.8px;" width="9" height="8" viewBox="0 0 9 8"><path d="M0.2 0.8 H8.2 L4.2 7.8 Z" fill="#7a7a7a"/></svg><svg class="r" style="left:1331px;top:444px;" width="16" height="16" viewBox="0 0 16 16"><path d="M1.5 6.5 L8 8.5 L14.5 6.5 V13 L8 15.5 L1.5 13 Z" fill="#d9bb84" stroke="#85622c" stroke-width=".8"/><path d="M8 8.5 V15.5" stroke="#85622c" stroke-width=".7"/><path d="M1.5 6.5 L0 4.5 L5 3.5 M14.5 6.5 L16 4.5 L11 3.5" fill="#e8cc98" stroke="#85622c" stroke-width=".7"/><circle cx="8" cy="4.6" r="3.9" fill="#3d94dc" stroke="#1f5e9c" stroke-width=".6"/><path d="M4.5 4.6 H11.5 M8 1 V8 M5.5 2.5 Q8 4 10.5 2.5" stroke="#cfe8ff" stroke-width=".6" fill="none"/></svg><div class="t" style="left:1355.00px;top:444.45px;font-size:14px;line-height:14px;font-weight:400;color:#9e9e9e;letter-spacing:0.069px;">Projects • 2023.1_Wiki_Correct-(Activity)_Project</div><svg class="r" style="left:1331px;top:470.85px;" width="9" height="9" viewBox="0 0 9 9"><path d="M0.2 0.2 L7.8 4.2 L0.2 8.2 Z" fill="#7a7a7a"/></svg><svg class="r" style="left:1347px;top:467px;" width="16" height="16" viewBox="0 0 16 16"><path d="M1 3.5 H6 L7.5 5 H13.5 V7 H4 L1 13.5 Z" fill="#dcb462" stroke="#a0722c" stroke-width="1"/><path d="M3.5 7 H15.5 L13 14 H1 Z" fill="#e6c474" stroke="#a0722c" stroke-width="1"/><path d="M4.5 9 H13" stroke="#f6e2a8" stroke-width="0.8"/></svg><div class="t" style="left:1371.00px;top:466.70px;font-size:14px;line-height:14px;font-weight:400;color:#9e9e9e;letter-spacing:0.214px;">Profiles</div><svg class="r" style="left:1331px;top:493.3px;" width="9" height="8" viewBox="0 0 9 8"><path d="M0.2 0.8 H8.2 L4.2 7.8 Z" fill="#7a7a7a"/></svg><svg class="r" style="left:1347px;top:489px;" width="16" height="16" viewBox="0 0 16 16"><ellipse cx="7" cy="3" rx="6" ry="2.3" fill="#8ed0f0" stroke="#2a7ab8" stroke-width=".7"/><path d="M1 3 V12 Q7 15 13 12 V3" fill="#5ab0e0" stroke="#2a7ab8" stroke-width=".7"/><rect x="7" y="6.5" width="7" height="6" fill="#ddd" stroke="#777" stroke-width=".6"/><rect x="5" y="8.5" width="7" height="6" fill="#eee" stroke="#777" stroke-width=".6"/><path d="M7.5 6.5 L9 5" stroke="#d02020" stroke-width="1.2"/><path d="M9 6.5 L11 5" stroke="#40a040" stroke-width="1.2"/></svg><div class="t" style="left:1371.00px;top:488.95px;font-size:14px;line-height:14px;font-weight:400;color:#9e9e9e;letter-spacing:0.252px;">Correct (Activity) Content Model</div><svg class="r" style="left:1347px;top:515.55px;" width="9" height="8" viewBox="0 0 9 8"><path d="M0.2 0.8 H8.2 L4.2 7.8 Z" fill="#7a7a7a"/></svg><svg class="r" style="left:1363px;top:511px;" width="16" height="16" viewBox="0 0 16 16"><path d="M1 3.5 H6 L7.5 5 H13.5 V7 H4 L1 13.5 Z" fill="#dcb462" stroke="#a0722c" stroke-width="1"/><path d="M3.5 7 H15.5 L13 14 H1 Z" fill="#e6c474" stroke="#a0722c" stroke-width="1"/><path d="M4.5 9 H13" stroke="#f6e2a8" stroke-width="0.8"/><path d="M8 9.5 L12 7.5 L16 9.5 L16 13.5 L12 15.5 L8 13.5Z" fill="#8ecae6" stroke="#3a7aa8" stroke-width=".7"/></svg><div class="t" style="left:1387.00px;top:511.20px;font-size:14px;line-height:14px;font-weight:400;color:#9e9e9e;letter-spacing:-0.039px;">Local Resources</div><svg class="r" style="left:1363px;top:537.8px;" width="9" height="8" viewBox="0 0 9 8"><path d="M0.2 0.8 H8.2 L4.2 7.8 Z" fill="#7a7a7a"/></svg><svg class="r" style="left:1379px;top:533px;" width="16" height="16" viewBox="0 0 16 16"><path d="M1 3.5 H6 L7.5 5 H13.5 V7 H4 L1 13.5 Z" fill="#dcb462" stroke="#a0722c" stroke-width="1"/><path d="M3.5 7 H15.5 L13 14 H1 Z" fill="#e6c474" stroke="#a0722c" stroke-width="1"/><path d="M4.5 9 H13" stroke="#f6e2a8" stroke-width="0.8"/></svg><div class="t" style="left:1403.00px;top:533.45px;font-size:14px;line-height:14px;font-weight:400;color:#9e9e9e;letter-spacing:0.344px;">Sensitive Information Extractors</div><svg class="r" style="left:1395px;top:556px;" width="16" height="16" viewBox="0 0 16 16"><rect x="0.5" y="4.5" width="15" height="7" fill="#e8f0f8" stroke="#2a6ab0" stroke-width="1"/><text x="8" y="10.3" font-family="Liberation Mono" font-weight="700" font-size="5.5" fill="#2a6ab0" text-anchor="middle">0723</text></svg><div class="t" style="left:1419.00px;top:555.70px;font-size:14px;line-height:14px;font-weight:400;color:#dcdcdc;letter-spacing:0.246px;">VAL - Sensitive Information</div><svg class="r" style="left:1363px;top:582.0999999999999px;" width="9" height="9" viewBox="0 0 9 9"><path d="M0.2 0.2 L7.8 4.2 L0.2 8.2 Z" fill="#7a7a7a"/></svg><svg class="r" style="left:1379px;top:578px;" width="16" height="16" viewBox="0 0 16 16"><path d="M1 3.5 H6 L7.5 5 H13.5 V7 H4 L1 13.5 Z" fill="#dcb462" stroke="#a0722c" stroke-width="1"/><path d="M3.5 7 H15.5 L13 14 H1 Z" fill="#e6c474" stroke="#a0722c" stroke-width="1"/><path d="M4.5 9 H13" stroke="#f6e2a8" stroke-width="0.8"/></svg><div class="t" style="left:1403.00px;top:577.95px;font-size:14px;line-height:14px;font-weight:400;color:#9e9e9e;letter-spacing:0.253px;">Value Extractors</div><svg class="r" style="left:1347px;top:604.3499999999999px;" width="9" height="9" viewBox="0 0 9 9"><path d="M0.2 0.2 L7.8 4.2 L0.2 8.2 Z" fill="#7a7a7a"/></svg><svg class="r" style="left:1363px;top:600px;" width="16" height="16" viewBox="0 0 16 16"><rect x="1.5" y="1" width="13" height="14" fill="#f0f0f0" stroke="#888" stroke-width=".7"/><g stroke="#444" stroke-width="1"><path d="M3.5 3.5 H5 M7 3.5 H12.5 M3.5 7 H5 M7 7 H12.5 M3.5 10.5 H5 M7 10.5 H12.5 M3.5 13 H5 M7 13 H12.5"/></g></svg><div class="t" style="left:1387.00px;top:600.20px;font-size:14px;line-height:14px;font-weight:400;color:#9e9e9e;letter-spacing:0.35px;">Data Model</div><div class="r" style="left:1382px;top:549px;width:221px;height:28px;border:2px solid #f5e61e;box-sizing:border-box;"></div><div class="r" style="left:1073px;top:351px;width:467px;height:33px;border:2px solid #f5e61e;box-sizing:border-box;"></div><svg class="r" style="left:0;top:0" width="1920" height="1080" viewBox="0 0 1920 1080">
<defs><filter id="sh" x="-20%" y="-20%" width="140%" height="140%"><feDropShadow dx="2" dy="2" stdDeviation="2" flood-color="#000" flood-opacity=".45"/></filter></defs>
<g filter="url(#sh)" fill="#f7941d">
<rect x="1447" y="131" width="335" height="146"/>
<circle cx="1614.5" cy="278" r="19.5"/>
<path d="M1601 292 L1549 345" stroke="#f7941d" stroke-width="5.5"/>
<path d="M1526 367.5 L1542 337.5 L1556.5 352.5 Z"/>
<rect x="1446" y="657" width="335" height="146"/>
<circle cx="1614" cy="656.5" r="19.5"/>
<path d="M1600 641 L1547 592" stroke="#f7941d" stroke-width="5.5"/>
<path d="M1525 570 L1554.5 585.5 L1540.5 599 Z"/>
</g>
</svg><div class="t" style="left:1413.6px;width:400px;text-align:center;top:150.04px;font-size:22.4px;line-height:22.4px;font-weight:700;color:#ffffff;letter-spacing:0.0px;">Open the Removal Extractor</div><div class="t" style="left:1413.6px;width:400px;text-align:center;top:178.79px;font-size:22.4px;line-height:22.4px;font-weight:700;color:#ffffff;letter-spacing:0.0px;">property and click the</div><div class="t" style="left:1413.6px;width:400px;text-align:center;top:207.54px;font-size:22.4px;line-height:22.4px;font-weight:700;color:#ffffff;letter-spacing:0.0px;">hamburger icon to the right</div><div class="t" style="left:1413.6px;width:400px;text-align:center;top:236.29px;font-size:22.4px;line-height:22.4px;font-weight:700;color:#ffffff;letter-spacing:0.0px;">of the Extractor property.</div><div class="t" style="left:1414.5px;width:400px;text-align:center;top:265.68px;font-size:24px;line-height:24px;font-weight:700;color:#ffffff;letter-spacing:0.0px;">5</div><div class="t" style="left:1414px;width:400px;text-align:center;top:644.18px;font-size:24px;line-height:24px;font-weight:700;color:#ffffff;letter-spacing:0.0px;">6</div><div class="t" style="left:1412.5px;width:400px;text-align:center;top:676.64px;font-size:22.4px;line-height:22.4px;font-weight:700;color:#ffffff;letter-spacing:0.1px;">Select the Value Extractor</div><div class="t" style="left:1412.5px;width:400px;text-align:center;top:705.24px;font-size:22.4px;line-height:22.4px;font-weight:700;color:#ffffff;letter-spacing:0.1px;">returning the information</div><div class="t" style="left:1412.5px;width:400px;text-align:center;top:733.84px;font-size:22.4px;line-height:22.4px;font-weight:700;color:#ffffff;letter-spacing:0.1px;">you want removed from</div><div class="t" style="left:1412.5px;width:400px;text-align:center;top:762.44px;font-size:22.4px;line-height:22.4px;font-weight:700;color:#ffffff;letter-spacing:0.1px;">the text data.</div>
</body></html>
